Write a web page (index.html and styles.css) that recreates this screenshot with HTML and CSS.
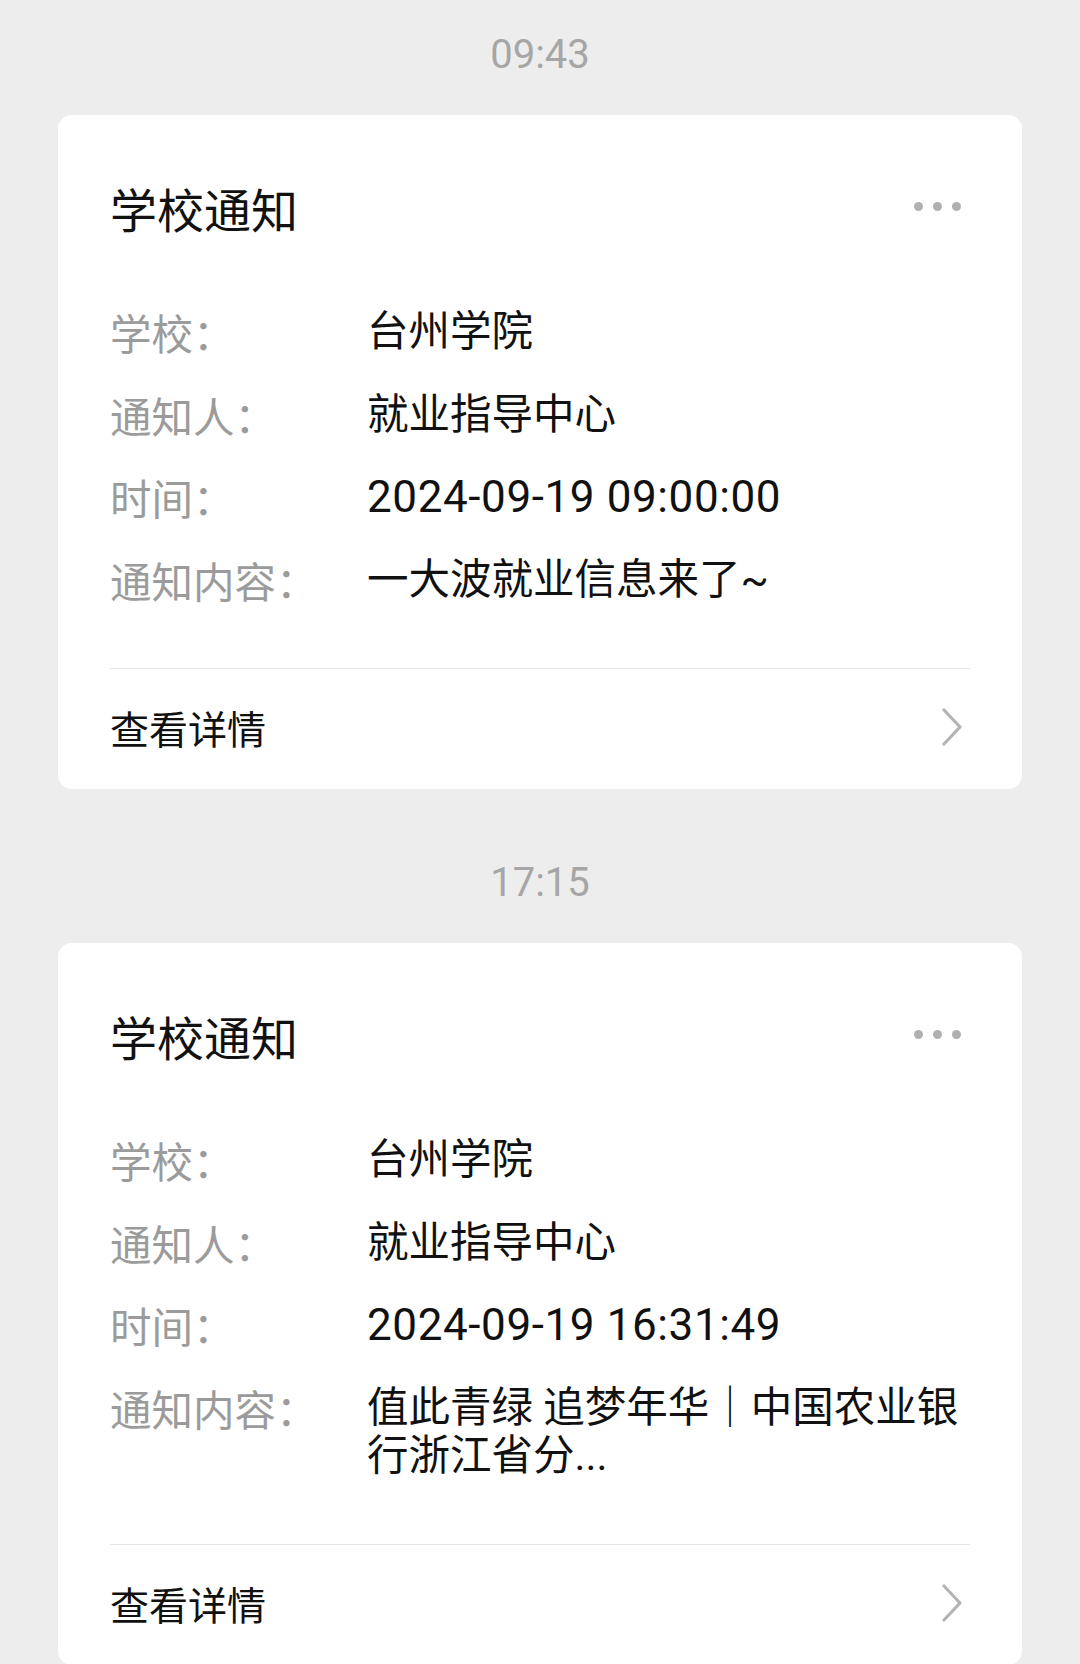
FILE: index.html
```html
<!DOCTYPE html>
<html lang="zh-CN">
<head>
    <meta charset="UTF-8">
    <title>学校通知</title>
    <link rel="stylesheet" href="styles.css">
</head>
<body>
    <div class="msg-list">
        <div class="msg-time">09:43</div>
        <div class="notice-card">
            <div class="notice-head">
                <div class="notice-title">学校通知</div>
                <div class="notice-more"><i></i><i></i><i></i></div>
            </div>
            <div class="notice-rows">
                <div class="notice-row">
                    <span class="row-label">学校：</span>
                    <span class="row-value">台州学院</span>
                </div>
                <div class="notice-row">
                    <span class="row-label">通知人：</span>
                    <span class="row-value">就业指导中心</span>
                </div>
                <div class="notice-row">
                    <span class="row-label">时间：</span>
                    <span class="row-value num">2024-09-19 09:00:00</span>
                </div>
                <div class="notice-row">
                    <span class="row-label">通知内容：</span>
                    <span class="row-value">一大波就业信息来了~</span>
                </div>
            </div>
            <div class="notice-foot">
                <span>查看详情</span>
                <svg class="arrow" width="22" height="38" viewBox="0 0 22 38">
                    <polyline points="3,2 19,19 3,36" fill="none" stroke="#b4b4b4" stroke-width="3.2" stroke-linecap="round" stroke-linejoin="round"/>
                </svg>
            </div>
        </div>

        <div class="msg-time">17:15</div>
        <div class="notice-card">
            <div class="notice-head">
                <div class="notice-title">学校通知</div>
                <div class="notice-more"><i></i><i></i><i></i></div>
            </div>
            <div class="notice-rows">
                <div class="notice-row">
                    <span class="row-label">学校：</span>
                    <span class="row-value">台州学院</span>
                </div>
                <div class="notice-row">
                    <span class="row-label">通知人：</span>
                    <span class="row-value">就业指导中心</span>
                </div>
                <div class="notice-row">
                    <span class="row-label">时间：</span>
                    <span class="row-value num">2024-09-19 16:31:49</span>
                </div>
                <div class="notice-row">
                    <span class="row-label">通知内容：</span>
                    <span class="row-value">值此青绿 追梦年华｜中国农业银行浙江省分...</span>
                </div>
            </div>
            <div class="notice-foot">
                <span>查看详情</span>
                <svg class="arrow" width="22" height="38" viewBox="0 0 22 38">
                    <polyline points="3,2 19,19 3,36" fill="none" stroke="#b4b4b4" stroke-width="3.2" stroke-linecap="round" stroke-linejoin="round"/>
                </svg>
            </div>
        </div>
    </div>
</body>
</html>
```

FILE: styles.css
```css
* {
    margin: 0;
    padding: 0;
    box-sizing: border-box;
}
body {
    background: #ededed;
    font-family: "Noto Sans CJK SC", "Noto Sans", sans-serif;
    color: #111;
}
.msg-list {
    padding: 0 58px;
}
.msg-time {
    padding: 30px 0 35px;
    line-height: 50px;
    text-align: center;
    font-family: Roboto, "Noto Sans", sans-serif;
    font-size: 40px;
    color: #a6a6a6;
}
.notice-card {
    background: #fff;
    border-radius: 14px;
    padding: 0 52px;
    margin-bottom: 39px;
}
.notice-head {
    display: flex;
    align-items: center;
    justify-content: space-between;
    padding-top: 63px;
    height: 123px;
}
.notice-title {
    font-size: 47px;
    line-height: 60px;
}
.notice-more {
    display: flex;
    gap: 10px;
    margin-right: 9px;
    margin-top: -4px;
}
.notice-more i {
    width: 9px;
    height: 9px;
    border-radius: 50%;
    background: #b0b0b0;
}
.notice-rows {
    display: flex;
    flex-direction: column;
    gap: 34.5px;
    padding: 70px 0 64.5px;
    border-bottom: 1px solid #e6e6e6;
}
.notice-row {
    display: flex;
    font-size: 41.5px;
    line-height: 48px;
}
.row-label {
    flex: 0 0 257px;
    color: #9b9b9b;
}
.row-value {
    flex: 1;
    font-family: Roboto, "Noto Sans CJK SC", sans-serif;
}
.num {
    font-size: 44px;
    letter-spacing: 0.6px;
}
.notice-foot {
    display: flex;
    align-items: center;
    justify-content: space-between;
    height: 120px;
    padding-bottom: 4px;
    font-size: 39px;
}
.arrow {
    margin-right: 7px;
}
```
